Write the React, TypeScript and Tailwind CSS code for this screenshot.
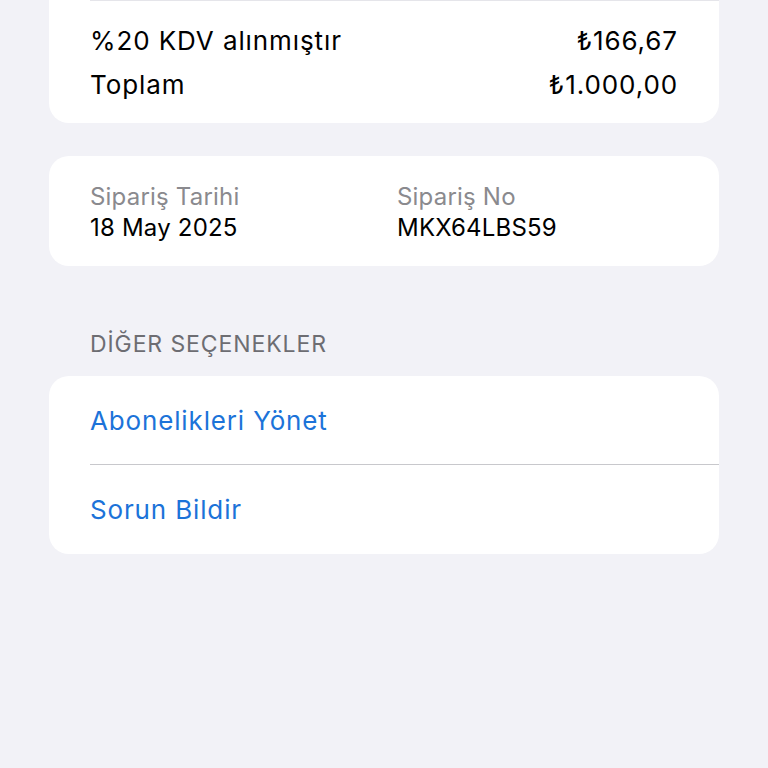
export default function App() {
  return (
    <div
      className="min-h-[768px] w-full bg-[#f2f2f7] px-[49px]"
      style={{ fontFamily: 'Inter, Roboto, "Noto Sans", sans-serif' }}
    >
      {/* summary card, top part scrolled away */}
      <div className="rounded-b-[20px] bg-white pb-[17px]">
        <div className="ml-[41px] h-px bg-[#e5e5ea]" />
        <div className="px-[41px] pt-[17px] text-[26px] tracking-[0.9px] text-black">
          <div className="flex h-[44px] items-center justify-between">
            <span>%20 KDV alınmıştır</span>
            <span>₺166,67</span>
          </div>
          <div className="flex h-[44px] items-center justify-between">
            <span>Toplam</span>
            <span>₺1.000,00</span>
          </div>
        </div>
      </div>

      <div className="mt-[33px] grid grid-cols-[307px_1fr] rounded-[20px] bg-white px-[41px] pb-[23px] pt-[25px] text-[24px] leading-[31px] tracking-[0.2px]">
        <div>
          <div className="text-[#8a8a8e]">Sipariş Tarihi</div>
          <div className="text-black">18 May 2025</div>
        </div>
        <div>
          <div className="text-[#8a8a8e]">Sipariş No</div>
          <div className="text-black">MKX64LBS59</div>
        </div>
      </div>

      <div className="mt-[63px] px-[41px] text-[23px] leading-[30px] tracking-[0.9px] text-[#6d6d72]">
        DİĞER SEÇENEKLER
      </div>

      <div className="mt-[17px] rounded-[20px] bg-white text-[26px] tracking-[0.85px] text-[#1c73d9]">
        <div className="flex h-[88px] items-center px-[41px]">Abonelikleri Yönet</div>
        <div className="ml-[41px] h-px bg-[#c8c8cc]" />
        <div className="flex h-[89px] items-center px-[41px]">Sorun Bildir</div>
      </div>
    </div>
  );
}
